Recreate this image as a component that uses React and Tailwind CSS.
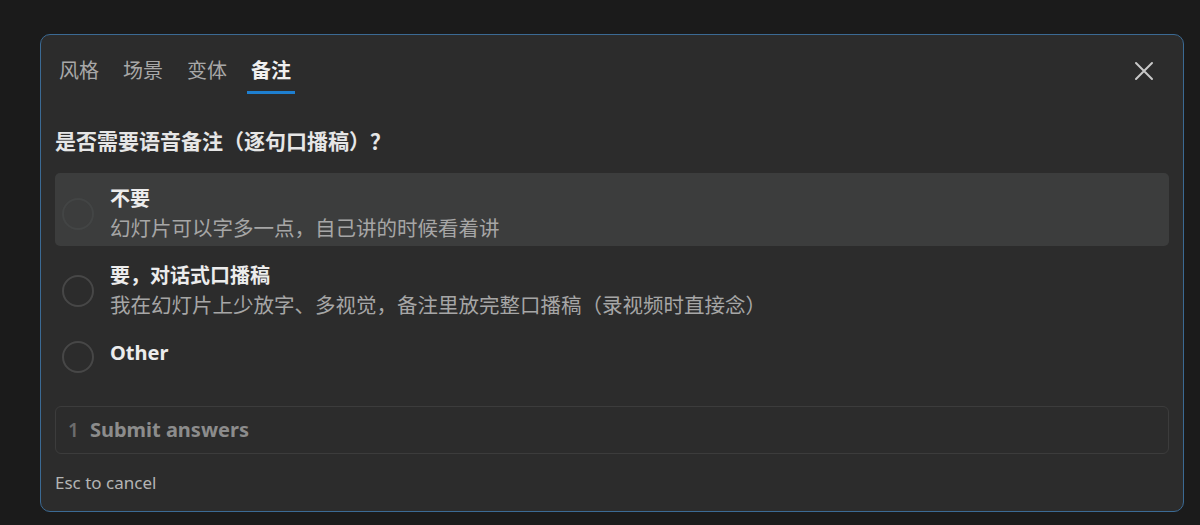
import { useState } from "react";

const tabs = ["风格", "场景", "变体", "备注"];

const options = [
  { title: "不要", desc: "幻灯片可以字多一点，自己讲的时候看着讲" },
  { title: "要，对话式口播稿", desc: "我在幻灯片上少放字、多视觉，备注里放完整口播稿（录视频时直接念）" },
  { title: "Other", desc: null },
];

function App() {
  const [active] = useState(3);
  const [hovered] = useState(0);

  return (
    <div
      className="w-[1200px] h-[525px] bg-[#1b1b1b] pt-[34px] pl-[40px]"
      style={{ fontFamily: '"Noto Sans", "Noto Sans CJK SC", sans-serif' }}
    >
      <div className="w-[1144px] h-[478px] rounded-[10px] border border-[#3b6a94] bg-[#2c2c2c] px-[14px] flex flex-col">
        {/* TABS */}
        <div className="flex justify-between items-start pt-[23px]">
          <div className="flex gap-[16px]">
            {tabs.map((t, i) => (
              <div
                key={t}
                className={`px-[4px] text-[20px] leading-[26px] pb-[7px] border-b-[3px] ${
                  i === active
                    ? "text-[#f0f0f0] font-bold border-[#1e7fd0]"
                    : "text-[#a8a8a8] border-transparent"
                }`}
              >
                {t}
              </div>
            ))}
          </div>
          <button className="mr-[15px] mt-[3px] text-[#c8c8c8]">
            <svg width="20" height="20" viewBox="0 0 20 20" fill="none" stroke="currentColor" strokeWidth="2" strokeLinecap="round">
              <path d="M2 2L18 18M18 2L2 18" />
            </svg>
          </button>
        </div>

        {/* QUESTION */}
        <p className="mt-[33px] text-[21px] leading-[28px] font-bold text-[#e6e6e6]">
          是否需要语音备注（逐句口播稿）？
        </p>

        {/* OPTIONS */}
        <div className="mt-[18px] flex flex-col gap-[4px]">
          {options.map((o, i) => (
            <div
              key={o.title}
              className={`flex items-center gap-[16px] pl-[7px] pt-[12px] pb-[3px] min-h-[50px] rounded-[5px] ${
                i === hovered ? "bg-[#3c3d3d]" : ""
              }`}
            >
              <span
                className={`w-[32px] h-[32px] rounded-full border-2 shrink-0 ${
                  i === hovered ? "border-[#434545]" : "border-[#474747]"
                }`}
              />
              <div className="self-start">
                <p className="text-[20px] leading-[28px] font-bold text-[#ececec]">{o.title}</p>
                {o.desc && (
                  <p className="text-[20.5px] leading-[30px] text-[#a6a6a6]">{o.desc}</p>
                )}
              </div>
            </div>
          ))}
        </div>

        {/* SUBMIT */}
        <div className="mt-[29px] h-[48px] rounded-[6px] border border-[#3c3c3c] flex items-center pl-[12px] gap-[11px]">
          <span className="text-[19px] font-semibold text-[#6c6c6c]">1</span>
          <span className="text-[20px] font-bold text-[#8c8c8c]">Submit answers</span>
        </div>

        <p className="mt-[17px] text-[17px] leading-[24px] text-[#b4b4b4]">Esc to cancel</p>
      </div>
    </div>
  );
}

export default App;
